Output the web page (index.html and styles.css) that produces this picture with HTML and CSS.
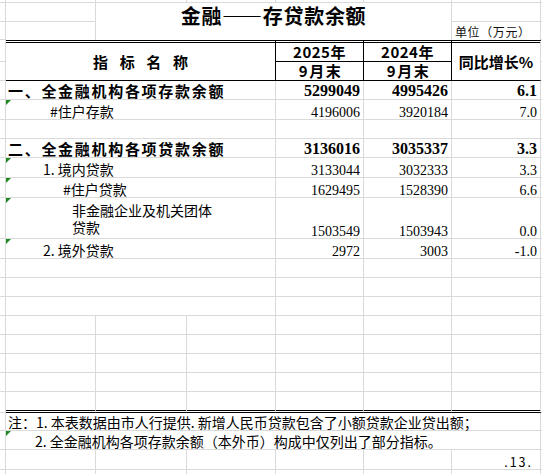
FILE: index.html
```html
<!DOCTYPE html>
<html lang="zh-CN">
<head>
<meta charset="utf-8">
<title>金融——存贷款余额</title>
<link rel="stylesheet" href="styles.css">
</head>
<body>
<div class="sheet">
  <!-- top partial row -->
  <div class="c"></div><div class="c"></div><div class="c"></div><div class="c"></div><div class="c"></div><div class="c"></div><div class="c"></div><div class="c g"></div>
  <!-- title rows -->
  <div class="c"></div><div class="c"></div>
  <div class="c title">金融——存贷款余额</div>
  <div class="c"></div><div class="c g"></div>
  <div class="c"></div><div class="c nb"></div><div class="c nb unit">单位（万元）</div><div class="c g"></div>
  <!-- header -->
  <div class="c"></div>
  <div class="c h hname">指标名称</div>
  <div class="c h hy">2025年</div>
  <div class="c h hy">2024年</div>
  <div class="c h hpct">同比增长%</div>
  <div class="c g"></div>
  <div class="c"></div>
  <div class="c h hm">9月末</div>
  <div class="c h hm">9月末</div>
  <div class="c g"></div>
  <!-- data -->
  <div class="c"></div>
  <div class="c lab strong">一、全金融机构各项存款余额</div>
  <div class="c num bold">5299049</div>
  <div class="c num bold">4995426</div>
  <div class="c num bold">6.1</div>
  <div class="c g"></div>

  <div class="c"></div>
  <div class="c lab tri i50">#住户存款</div>
  <div class="c num">4196006</div>
  <div class="c num">3920184</div>
  <div class="c num">7.0</div>
  <div class="c g"></div>

  <div class="c"></div>
  <div class="c lab"></div>
  <div class="c"></div><div class="c"></div><div class="c"></div>
  <div class="c g"></div>

  <div class="c"></div>
  <div class="c lab strong">二、全金融机构各项贷款余额</div>
  <div class="c num bold">3136016</div>
  <div class="c num bold">3035337</div>
  <div class="c num bold">3.3</div>
  <div class="c g"></div>

  <div class="c"></div>
  <div class="c lab tri i43">1. 境内贷款</div>
  <div class="c num">3133044</div>
  <div class="c num">3032333</div>
  <div class="c num">3.3</div>
  <div class="c g"></div>

  <div class="c"></div>
  <div class="c lab tri i63">#住户贷款</div>
  <div class="c num">1629495</div>
  <div class="c num">1528390</div>
  <div class="c num">6.6</div>
  <div class="c g"></div>

  <div class="c"></div>
  <div class="c lab tri i72 two"><span class="ln">非金融企业及机关团体</span><span class="ln">贷款</span></div>
  <div class="c num">1503549</div>
  <div class="c num">1503943</div>
  <div class="c num">0.0</div>
  <div class="c g"></div>

  <div class="c"></div>
  <div class="c lab tri i43">2. 境外贷款</div>
  <div class="c num">2972</div>
  <div class="c num">3003</div>
  <div class="c num">-1.0</div>
  <div class="c g"></div>

  <!-- empty merged rows -->
  <div class="c"></div><div class="c lab"></div><div class="c"></div><div class="c"></div><div class="c"></div><div class="c g"></div>
  <div class="c"></div><div class="c lab"></div><div class="c"></div><div class="c"></div><div class="c"></div><div class="c g"></div>
  <div class="c"></div><div class="c lab"></div><div class="c"></div><div class="c"></div><div class="c"></div><div class="c g"></div>
  <!-- empty plain rows -->
  <div class="c"></div><div class="c"></div><div class="c"></div><div class="c"></div><div class="c"></div><div class="c"></div><div class="c"></div><div class="c g"></div>
  <div class="c"></div><div class="c"></div><div class="c"></div><div class="c"></div><div class="c"></div><div class="c"></div><div class="c"></div><div class="c g"></div>
  <div class="c"></div><div class="c"></div><div class="c"></div><div class="c"></div><div class="c"></div><div class="c"></div><div class="c"></div><div class="c g"></div>
  <div class="c"></div><div class="c"></div><div class="c"></div><div class="c"></div><div class="c"></div><div class="c"></div><div class="c"></div><div class="c g"></div>
  <div class="c"></div><div class="c dbl"></div><div class="c dbl"></div><div class="c dbl"></div><div class="c dbl"></div><div class="c dbl"></div><div class="c dbl"></div><div class="c g"></div>
  <!-- notes -->
  <div class="c"></div>
  <div class="c note n1">注：1. 本表数据由市人行提供. 新增人民币贷款包含了小额贷款企业贷出额；</div>
  <div class="c g"></div>
  <div class="c"></div>
  <div class="c note n2 tri">2. 全金融机构各项存款余额（本外币）构成中仅列出了部分指标。</div>
  <div class="c g"></div>
  <div class="c"></div><div class="c"></div><div class="c"></div><div class="c"></div><div class="c"></div><div class="c"></div><div class="c page">.13.</div><div class="c g"></div>
  <div class="c"></div><div class="c"></div><div class="c"></div><div class="c"></div><div class="c"></div><div class="c"></div><div class="c"></div><div class="c g"></div>
</div>
</body>
</html>
```
FILE: styles.css
```css
html, body {
  margin: 0;
  padding: 0;
  background: #ffffff;
}
body {
  width: 542px;
  height: 474px;
  overflow: hidden;
  font-family: "Noto Sans CJK SC", "Noto Sans", sans-serif;
  color: #000;
}
.sheet {
  display: grid;
  grid-template-columns: 6px 90px 91px 89px 88px 88px 89px 1px;
  grid-template-rows: 3px 19px 18px 22px 19px 19px 20px 19px 19px 20px 20px 41px 20px 19px 19px 19px 19px 19px 19px 19px 21px 18px 19px 20px 19px;
}
.c {
  box-sizing: border-box;
  border-right: 1px solid #dadada;
  border-bottom: 1px solid #dadada;
  position: relative;
  display: flex;
  min-width: 0;
  white-space: nowrap;
}
.c.g { border-right: none; }
.c.nb { border-bottom: none; }

.title {
  grid-column: span 4;
  grid-row: span 2;
  border-bottom: none;
  justify-content: center;
  align-items: flex-start;
  padding-top: 3px;
  font-size: 20px;
  line-height: 20px;
  font-weight: 700;
  letter-spacing: 0.7px;
}
.unit {
  font-size: 12px;
  line-height: 14px;
  letter-spacing: 0.6px;
  align-items: flex-end;
  padding: 0 0 1px 3px;
  color: #111;
}

.h {
  font-weight: 700;
  font-size: 15px;
  line-height: 16px;
  justify-content: center;
  align-items: center;
  border-bottom: 1px solid #000;
}
.hname {
  grid-column: span 3;
  grid-row: span 2;
  border-top: 3px double #000;
  border-right: 1px solid #000;
  letter-spacing: 11.7px;
  padding-left: 11.7px;
}
.hy {
  border-top: 3px double #000;
  border-right: 1px solid #000;
  letter-spacing: 0.5px;
}
.hm {
  border-right: 1px solid #000;
  letter-spacing: 1.5px;
  padding-left: 2px;
}
.hpct {
  grid-row: span 2;
  border-top: 3px double #000;
}

.lab {
  grid-column: span 3;
  align-items: flex-end;
  font-size: 14px;
  line-height: 16px;
}
.lab.strong {
  font-size: 15px;
  font-weight: 700;
  letter-spacing: 1.7px;
  padding-left: 2px;
}
.i43 { padding-left: 37px; }
.i50 { padding-left: 44px; }
.i63 { padding-left: 57px; }
.i72 { padding-left: 66px; }
.lab.two {
  flex-direction: column;
  justify-content: flex-end;
  align-items: flex-start;
  padding-bottom: 2px;
}
.lab.two .ln {
  display: block;
  line-height: 17px;
}

.num {
  justify-content: flex-end;
  align-items: flex-end;
  padding-right: 3px;
  font-family: "Liberation Serif", "Times New Roman", serif;
  font-size: 14px;
  line-height: 13px;
}
.num.bold {
  font-weight: 700;
  font-size: 16px;
  line-height: 16px;
}

.tri::before {
  content: "";
  position: absolute;
  left: 0;
  top: 0;
  width: 0;
  height: 0;
  border-top: 5px solid #1f8a1f;
  border-right: 5px solid transparent;
}

.dbl { border-bottom: 3px double #000; }

.note {
  grid-column: span 6;
  align-items: flex-end;
  font-size: 14px;
  line-height: 16px;
}
.n1 { padding-left: 2px; }
.n2 { padding-left: 29px; }

.page {
  justify-content: flex-end;
  align-items: flex-end;
  font-size: 12.5px;
  line-height: 15px;
  letter-spacing: 2px;
  padding-right: 7px;
}
```
